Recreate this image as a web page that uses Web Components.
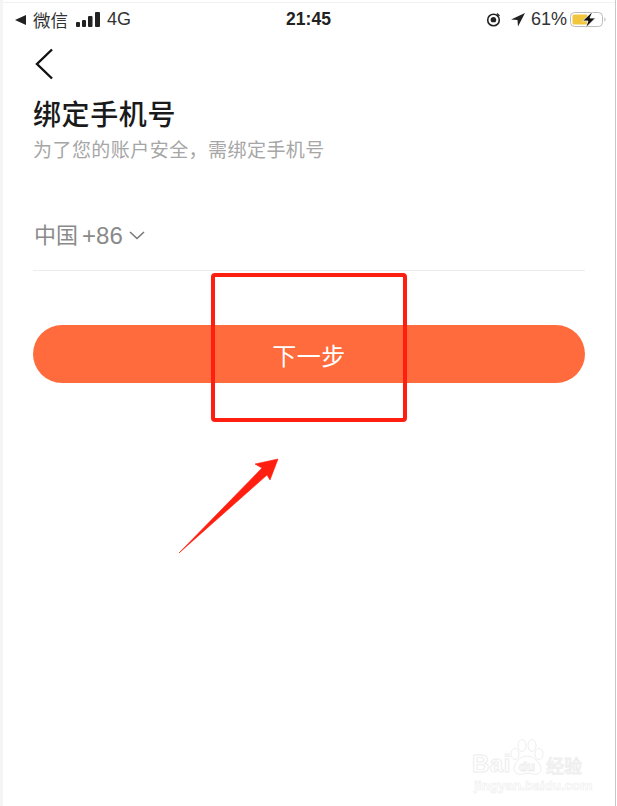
<!DOCTYPE html>
<html lang="zh">
<head>
<meta charset="utf-8">
<title>绑定手机号</title>
<style>
    html, body { margin: 0; height: 100%; background: #fff; }
    body { font-family: "Liberation Sans", "Noto Sans CJK SC", sans-serif; }
</style>
</head>
<body>
<phone-page>
    <status-bar></status-bar>
    <back-button></back-button>
    <page-title heading="绑定手机号" sub="为了您的账户安全，需绑定手机号"></page-title>
    <country-field name="中国" code="+86"></country-field>
    <next-button>下一步</next-button>
</phone-page>
<mark-up></mark-up>
<bai-mark></bai-mark>

<script>
class PhonePage extends HTMLElement {
    constructor() {
        super();
        const shadow = this.attachShadow({ mode: 'open' });
        shadow.innerHTML = `
            <style>
                :host {
                    display: flex;
                    flex-direction: column;
                    box-sizing: border-box;
                    height: 806px;
                    margin: 0 1px 0 3px;
                    padding-top: 2px;
                    background: #fff;
                    border-right: 1px solid #c9c9c9;
                    box-shadow: -3px 0 0 #f4f4f4;
                }
            </style>
            <slot></slot>
        `;
    }
}

class StatusBar extends HTMLElement {
    constructor() {
        super();
        const shadow = this.attachShadow({ mode: 'open' });
        shadow.innerHTML = `
            <style>
                :host {
                    display: grid;
                    grid-template-columns: 1fr auto 1fr;
                    align-items: center;
                    height: 34px;
                    padding: 0 7px 0 12px;
                    color: #333;
                    font-size: 18px;
                    border-top: 1px solid #f2f2f2;
                    box-sizing: border-box;
                }
                .side { display: flex; align-items: center; }
                .right { justify-content: flex-end; }
                .name { font-size: 17.5px; }
                .time { font-size: 17.5px; font-weight: bold; color: #222; margin-right: 6px; }
                svg { display: block; }
            </style>
            <div class="side">
                <svg width="11" height="10" viewBox="0 0 11 10" style="margin-right:7px"><path d="M0 5 11 0v10z" fill="#222"/></svg>
                <span class="name">微信</span>
                <svg width="25" height="16" viewBox="0 0 25 16" style="margin-left:8px"><g fill="#222"><rect x="0" y="10" width="4" height="5" rx="1"/><rect x="6" y="8" width="4" height="7" rx="1"/><rect x="12" y="4" width="4.500" height="11" rx="1"/><rect x="19" y="0" width="5" height="15" rx="1"/></g></svg>
                <span style="margin-left:6px">4G</span>
            </div>
            <div class="time">21:45</div>
            <div class="side right">
                <svg width="15" height="15" viewBox="0 0 15 15"><circle cx="7.500" cy="8" r="5.800" fill="none" stroke="#222" stroke-width="1.600"/><path d="M4.500 8a3 3 0 0 1 5-2.300l.9 2.300-.9 2.300H5.500z" fill="#222"/><path d="M10 1h4.500v4.500z" fill="#fff"/><path d="M11 1.500 13.500 4" stroke="#222" stroke-width="1.200"/></svg>
                <svg width="14" height="15" viewBox="0 0 14 15" style="margin-left:10px"><path d="M14 1 0 7.500l6.500.5.500 6.500z" fill="#222"/></svg>
                <span style="margin-left:6px">61%</span>
                <svg width="38" height="17" viewBox="0 0 38 17" style="margin-left:3px">
                    <rect x=".5" y="1.500" width="32" height="14" rx="4" fill="#fff" stroke="#bbb"/>
                    <rect x="2.500" y="3.500" width="15" height="10" rx="1.500" fill="#f2c63c"/>
                    <path d="M34.500 6.500v4c1.300-.4 1.300-3.600 0-4z" fill="#aaa"/>
                    <path d="M23 0 12.500 10h5.500l-2.500 7 10-10h-5.500z" fill="#111" stroke="#fff" stroke-width=".8"/>
                </svg>
            </div>
        `;
    }
}

class BackButton extends HTMLElement {
    constructor() {
        super();
        const shadow = this.attachShadow({ mode: 'open' });
        shadow.innerHTML = `
            <style>
                :host { display: block; padding: 12px 0 0 31px; height: 52px; box-sizing: border-box; }
                svg { display: block; }
            </style>
            <svg width="20" height="32" viewBox="0 0 20 32"><path d="M18 1.500 3 16l15 14.500" fill="none" stroke="#111" stroke-width="2.400"/></svg>
        `;
    }
}

class PageTitle extends HTMLElement {
    constructor() {
        super();
        const shadow = this.attachShadow({ mode: 'open' });
        shadow.innerHTML = `
            <style>
                :host { display: block; padding: 12px 0 0 30px; }
                h1 { margin: 0; font-size: 28px; line-height: 32px; font-weight: 500; color: #1a1a1a; letter-spacing: .6px; }
                p { margin: 6px 0 0; font-size: 19px; line-height: 26px; letter-spacing: .45px; color: #a6a6a6; }
            </style>
            <h1>${this.getAttribute('heading')}</h1>
            <p>${this.getAttribute('sub')}</p>
        `;
    }
}

class CountryField extends HTMLElement {
    constructor() {
        super();
        const shadow = this.attachShadow({ mode: 'open' });
        shadow.innerHTML = `
            <style>
                :host {
                    display: flex;
                    align-items: center;
                    gap: 6px;
                    box-sizing: border-box;
                    height: 68px;
                    margin: 39px 30px 0 30px;
                    padding: 0 0 0 1px;
                    border-bottom: 1px solid #ececec;
                    color: #8a8a8a;
                }
                span { line-height: 28px; margin-bottom: 2px; }
                .name { font-size: 22px; margin-right: -2px; }
                .code { font-size: 24px; }
                svg { display: block; margin-top: -2px; }
            </style>
            <span class="name">${this.getAttribute('name')}</span>
            <span class="code">${this.getAttribute('code')}</span>
            <svg width="16" height="9" viewBox="0 0 16 9"><path d="M1 1l7 6.500L15 1" fill="none" stroke="#777" stroke-width="1.500"/></svg>
        `;
    }
}

class NextButton extends HTMLElement {
    constructor() {
        super();
        const shadow = this.attachShadow({ mode: 'open' });
        shadow.innerHTML = `
            <style>
                :host {
                    display: flex;
                    align-items: center;
                    justify-content: center;
                    height: 58px;
                    margin: 54px 30px 0 30px;
                    border-radius: 29px;
                    background: #ff6b3d;
                    color: #fff;
                    font-size: 24px;
                    letter-spacing: .5px;
                }
            </style>
            <slot></slot>
        `;
    }
}

// red annotations drawn over the screenshot
class MarkUp extends HTMLElement {
    constructor() {
        super();
        const shadow = this.attachShadow({ mode: 'open' });
        shadow.innerHTML = `
            <style>
                :host { position: absolute; left: 0; top: 0; width: 617px; height: 806px; pointer-events: none; }
                .box {
                    position: absolute;
                    left: 211px;
                    top: 273px;
                    width: 196px;
                    height: 149px;
                    box-sizing: border-box;
                    border: 4px solid #ff1f10;
                    border-radius: 4px;
                }
                svg { position: absolute; left: 0; top: 0; }
            </style>
            <div class="box"></div>
            <svg width="617" height="806" viewBox="0 0 617 806"><path d="M179 553 262 468 255 464 278 459 270 480 267 475z" fill="#ff1f10" stroke="#ff1f10" stroke-width=".6" stroke-linejoin="round"/></svg>
        `;
    }
}

class BaiMark extends HTMLElement {
    constructor() {
        super();
        const shadow = this.attachShadow({ mode: 'open' });
        shadow.innerHTML = `
            <style>
                :host {
                    position: absolute;
                    left: 472px;
                    top: 738px;
                    width: 120px;
                    height: 62px;
                    color: #fff;
                    font-family: "Liberation Sans", "Noto Sans CJK SC", sans-serif;
                    pointer-events: none;
                }
                span { position: absolute; line-height: 1; -webkit-text-stroke: 1px #eeeeee; white-space: nowrap; }
                svg { position: absolute; left: 0; top: 0; }
            </style>
            <svg width="120" height="42" viewBox="0 0 120 42">
                <g fill="#fff" stroke="#eeeeee" stroke-width="1">
                    <ellipse cx="43" cy="16" rx="4" ry="5.500"/>
                    <ellipse cx="50" cy="7.500" rx="4" ry="6"/>
                    <ellipse cx="60" cy="7.500" rx="4" ry="6"/>
                    <ellipse cx="67" cy="16" rx="4" ry="5.500"/>
                    <path d="M55 18c8 0 14 8 14 13 0 5-5 6-8 5-4-1-6-1-10 0-3 1-9 0-9-5 0-5 5-13 13-13z"/>
                </g>
            </svg>
            <span style="left:0;top:14px;font-size:24px;font-weight:bold;letter-spacing:.5px">Bai</span>
            <span style="left:47px;top:22px;font-size:13px;font-weight:bold">du</span>
            <span style="left:74px;top:20px;font-size:18px">经验</span>
            <span style="left:2px;top:41px;font-size:13.500px;font-weight:bold;-webkit-text-stroke-width:.6px">jingyan.baidu.com</span>
        `;
    }
}

customElements.define('phone-page', PhonePage);
customElements.define('status-bar', StatusBar);
customElements.define('back-button', BackButton);
customElements.define('page-title', PageTitle);
customElements.define('country-field', CountryField);
customElements.define('next-button', NextButton);
customElements.define('mark-up', MarkUp);
customElements.define('bai-mark', BaiMark);
</script>
</body>
</html>
